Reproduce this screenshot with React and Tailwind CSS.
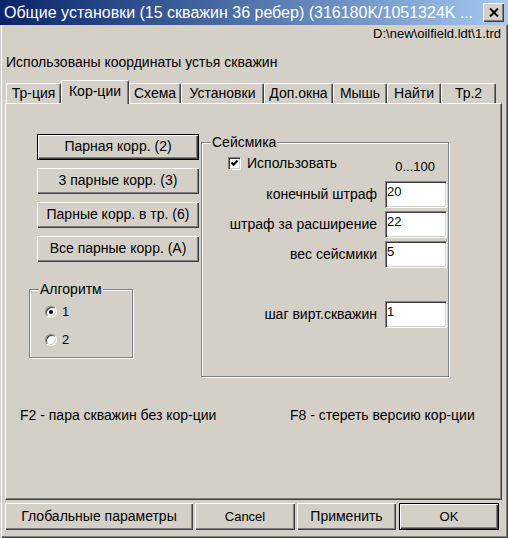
import React from "react";

function Btn({ children, className = "", def = false }) {
  if (def) {
    return (
      <div className={`border border-black ${className}`}>
        <div className="h-full w-full flex items-center justify-center pb-[1px] bg-[#d4d0c8] shadow-[inset_1px_1px_0_#fff,inset_-1px_-1px_0_#404040,inset_-2px_-2px_0_#808080]">
          {children}
        </div>
      </div>
    );
  }
  return (
    <div
      className={`flex items-center justify-center pb-[1px] bg-[#d4d0c8] shadow-[inset_1px_1px_0_#fff,inset_-1px_-1px_0_#404040,inset_-2px_-2px_0_#808080] ${className}`}
    >
      {children}
    </div>
  );
}

function Group({ label, className = "", children }) {
  return (
    <div
      className={`relative border border-[#808080] shadow-[inset_1px_1px_0_#fff,1px_1px_0_#fff] ${className}`}
    >
      <span className="absolute -top-[9px] left-[9px] bg-[#d4d0c8] px-[1px] leading-[16px]">
        {label}
      </span>
      {children}
    </div>
  );
}

function Field({ value }) {
  return (
    <div className="w-[62px] h-[27px] bg-white border border-t-[#808080] border-l-[#808080] border-r-white border-b-white shadow-[inset_1px_1px_0_#404040,inset_-1px_-1px_0_#d4d0c8] pl-[1px] pt-[2px] text-[13px] leading-[15px]">
      {value}
    </div>
  );
}

function Radio({ checked, label }) {
  return (
    <div className="flex items-center h-[15px]">
      <div className="w-[12px] h-[12px] rounded-full bg-white border border-t-[#808080] border-l-[#808080] border-r-white border-b-white shadow-[inset_1px_1px_0_#404040,inset_-1px_-1px_0_#d4d0c8] flex items-center justify-center">
        {checked && <div className="w-[4px] h-[4px] rounded-full bg-black" />}
      </div>
      <span className="ml-[5px] text-[13px]">{label}</span>
    </div>
  );
}

const tabs = [
  ["Тр-ция", 55],
  ["Кор-ции", 68],
  ["Схема", 52],
  ["Установки", 83],
  ["Доп.окна", 69],
  ["Мышь", 54],
  ["Найти", 54],
  ["Тр.2", 55],
];

export default function App() {
  return (
    <div className="w-[508px] h-[538px] bg-[#d4d0c8] flex flex-col overflow-hidden font-['Liberation_Sans',Arial,sans-serif] text-[14px] leading-[15px] text-black">
      {/* title bar */}
      <div className="h-[25px] shrink-0 bg-gradient-to-r from-[#0a246a] to-[#a6caf0] flex items-center pl-[4px] pr-[4px]">
        <span className="text-white text-[16px] leading-[18px] whitespace-nowrap overflow-hidden flex-1">
          Общие установки (15 скважин 36 ребер) (316180K/1051324K ...
        </span>
        <div className="w-[21px] h-[19px] shrink-0 bg-[#d4d0c8] shadow-[inset_1px_1px_0_#fff,inset_-1px_-1px_0_#404040,inset_-2px_-2px_0_#808080] flex items-center justify-center">
          <svg width="10" height="9" viewBox="0 0 10 9">
            <path d="M1 0.5 L9 8.5 M9 0.5 L1 8.5" stroke="#000" strokeWidth="2" />
          </svg>
        </div>
      </div>

      {/* body */}
      <div className="flex-1 flex flex-col shadow-[inset_1px_0_0_#d4d0c8,inset_2px_0_0_#fff,inset_-1px_-1px_0_#404040,inset_-2px_-2px_0_#808080]">
        <div className="mt-[1px] text-right pr-[7px] h-[15px] text-[13px]">D:\new\oilfield.ldt\1.trd</div>
        <div className="mt-[14px] pl-[6px] h-[15px]">Использованы координаты устья скважин</div>

        {/* tabs */}
        <div className="mt-[10px] h-[23px] flex items-end pl-[6px] relative z-10">
          {tabs.map(([t, w], i) =>
            i === 1 ? (
              <div
                key={t}
                style={{ width: w }}
                className="h-[24px] -mb-[1px] bg-[#d4d0c8] border-l border-t border-white rounded-tl-[2px] border-r border-r-[#404040] rounded-tr-[2px] shadow-[inset_-1px_0_0_#808080] text-center pt-[3px] whitespace-nowrap"
              >
                {t}
              </div>
            ) : (
              <div
                key={t}
                style={{ width: w }}
                className="h-[20px] bg-[#d4d0c8] border-l border-t border-white rounded-tl-[2px] border-r border-r-[#404040] rounded-tr-[2px] shadow-[inset_-1px_0_0_#808080] text-center pt-[2px] whitespace-nowrap"
              >
                {t}
              </div>
            )
          )}
        </div>

        {/* panel */}
        <div className="ml-[5px] w-[497px] h-[397px] border-l border-t border-white border-r border-b border-r-[#404040] border-b-[#404040] shadow-[inset_-1px_-1px_0_#808080] flex flex-col">
          <div className="flex items-start">
            {/* left column */}
            <div className="ml-[23px] w-[170px] flex flex-col">
              <div className="mt-[30px] ml-[8px] flex flex-col gap-[8px]">
                <Btn def className="w-[162px] h-[26px]">Парная корр. (2)</Btn>
                <Btn className="w-[162px] h-[26px]">3 парные корр. (3)</Btn>
                <Btn className="w-[162px] h-[26px]">Парные корр. в тр. (6)</Btn>
                <Btn className="w-[162px] h-[26px]">Все парные корр. (А)</Btn>
              </div>
              <Group label="Алгоритм" className="mt-[27px] w-[104px] h-[69px]">
                <div className="pl-[15px] pt-[14px] flex flex-col gap-[13px]">
                  <Radio checked label="1" />
                  <Radio label="2" />
                </div>
              </Group>
            </div>

            {/* seismic */}
            <Group label="Сейсмика" className="ml-[2px] mt-[38px] w-[248px] h-[235px]">
              <div className="flex flex-col">
                <div className="mt-[13px] flex items-start pl-[26px] pr-[13px]">
                  <div className="flex items-center h-[15px]">
                    <div className="w-[13px] h-[13px] bg-white border border-t-[#808080] border-l-[#808080] border-r-white border-b-white shadow-[inset_1px_1px_0_#404040,inset_-1px_-1px_0_#d4d0c8] flex items-center justify-center">
                      <svg width="9" height="9" viewBox="0 0 9 9">
                        <path d="M1.5 3.5 L3.5 5.8 L7.5 1.5" stroke="#000" strokeWidth="2" fill="none" />
                      </svg>
                    </div>
                    <span className="ml-[6px]">Использовать</span>
                  </div>
                  <span className="ml-auto mt-[3px] text-[13px]">0...100</span>
                </div>
                <div className="mt-[7px] flex flex-col gap-[3px]">
                  {[
                    ["конечный штраф", "20"],
                    ["штраф за расширение", "22"],
                    ["вес сейсмики", "5"],
                  ].map(([l, v]) => (
                    <div key={l} className="flex items-center justify-end gap-[8px] pr-[1px]">
                      <span>{l}</span>
                      <Field value={v} />
                    </div>
                  ))}
                </div>
                <div className="mt-[33px] flex items-center justify-end gap-[8px] pr-[1px]">
                  <span>шаг вирт.скважин</span>
                  <Field value="1" />
                </div>
              </div>
            </Group>
          </div>

          <div className="mt-[31px] flex">
            <span className="w-[284px] pl-[14px]">F2 - пара скважин без кор-ции</span>
            <span>F8 - стереть версию кор-ции</span>
          </div>
        </div>

        {/* bottom buttons */}
        <div className="mt-[3px] ml-[5px] flex">
          <Btn className="w-[188px] h-[27px]">Глобальные параметры</Btn>
          <Btn className="ml-[2px] w-[100px] h-[27px] text-[13px]">Cancel</Btn>
          <Btn className="ml-[2px] w-[99px] h-[27px]">Применить</Btn>
          <Btn def className="ml-[3px] w-[100px] h-[27px] text-[13px]">OK</Btn>
        </div>
      </div>
    </div>
  );
}
